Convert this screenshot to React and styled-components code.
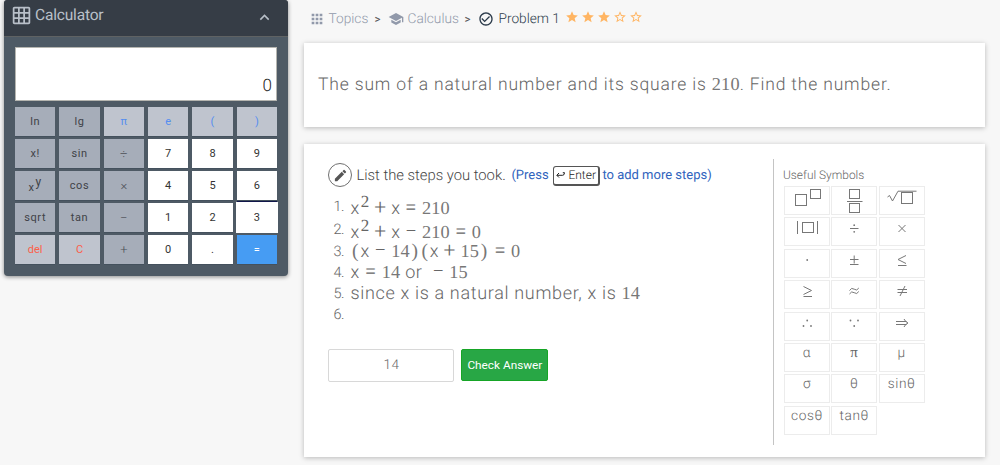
import React from 'react';
import styled, { createGlobalStyle } from 'styled-components';
import {
  MdApps, MdSchool, MdCheckCircleOutline, MdStar, MdStarBorder,
  MdEdit, MdGridOn, MdExpandLess,
} from 'react-icons/md';

const Global = createGlobalStyle`
  * { box-sizing: border-box; }
  html, body { margin: 0; height: 465px; overflow: hidden; background: #f7f7f7; }
  body {
    font-family: Roboto, "Liberation Sans", sans-serif;
    color: #666;
    text-rendering: geometricPrecision;
  }
  svg { display: block; flex: none; }
`;

const Page = styled.div`
  display: flex;
  align-items: flex-start;
  gap: 16px;
  height: 465px;
  padding-left: 4px;
  background: #f7f7f7;
`;

const Calculator = styled.aside`
  width: 284px;
  height: 276px;
  flex: none;
  background: #4e5a65;
  border-radius: 4px;
  box-shadow: 0 1px 4px rgba(0, 0, 0, 0.45);
`;

const CalcHeader = styled.header`
  display: flex;
  align-items: center;
  height: 37px;
  padding: 0 14px 6px 7px;
  background: #363d46;
  border-bottom: 1px solid #5f6263;
  border-radius: 3px 3px 0 0;
  color: #b9c0c9;
`;

const CalcTitle = styled.h1`
  flex: 1;
  margin: 0 0 0 3px;
  font-size: 15.5px;
  font-weight: 400;
  line-height: 31px;
  letter-spacing: -0.18px;
`;

const Chevron = styled(MdExpandLess)`
  position: relative;
  top: 2px;
`;

const Display = styled.div`
  display: flex;
  justify-content: flex-end;
  align-items: flex-end;
  height: 54px;
  margin: 10px 11px 6px;
  padding: 0 4px 3px;
  background: #fff;
  border: 1px solid #b5b5b0;
  color: #222;
  font-size: 17px;
  font-weight: 300;
  line-height: 22px;
`;

const Keys = styled.div`
  display: grid;
  grid-template-columns: repeat(6, 1fr);
  grid-auto-rows: 29px;
  gap: 3.1px 4px;
  margin: 0 11px;
`;

const tones = {
  fn: ['#a6adb9', '#3f4247'],
  op: ['#a6adb9', '#4d5158'],
  sym: ['#bfc4ce', '#558ef0'],
  num: ['#ffffff', '#333333'],
  del: ['#bfc4ce', '#fb604a'],
  eq: ['#469cf3', '#ffffff'],
};

const Key = styled.button`
  display: flex;
  align-items: center;
  justify-content: center;
  padding: 0;
  border: 0;
  background: ${(p) => tones[p.$tone][0]};
  color: ${(p) => tones[p.$tone][1]};
  box-shadow: ${(p) => (p.$active ? '0 0 0 1px #fff, 0 -2px 0 #10164a' : '0 1px 0 rgba(40,55,70,.25)')};
  font: 400 ${(p) => (p.$tone === 'op' ? 13 : 11)}px/28px Roboto, sans-serif;
  font-weight: ${(p) => (p.$tone === 'op' ? 300 : 400)};
  letter-spacing: ${(p) => (p.$tone === 'fn' ? '0.6px' : '0')};
`;

const PowerLabel = styled.span`
  position: relative;
  top: 2px;
`;

const Power = styled.sup`
  font-size: 12px;
  line-height: 1;
  position: relative;
  top: -5px;
  margin-left: 1px;
  vertical-align: baseline;
`;

const Main = styled.main`
  width: 682px;
  flex: none;
`;

const Crumbs = styled.nav`
  display: flex;
  align-items: center;
  height: 43px;
  padding: 0 0 5px 4.5px;
  font-size: 13.7px;
  font-weight: 300;
`;

const Crumb = styled.span`
  display: flex;
  align-items: center;
  gap: ${(p) => p.$gap || 4}px;
  width: ${(p) => p.$w}px;
  white-space: nowrap;
  color: ${(p) => (p.$current ? '#2b3a4a' : '#9199aa')};
`;

const Sep = styled.span`
  width: ${(p) => p.$w}px;
  color: #555;
  font-size: 11.5px;
  font-weight: 400;
`;

const Stars = styled.div`
  display: flex;
  gap: 2.1px;
  padding-bottom: 4px;
  color: #ffb563;
`;

const Card = styled.section`
  width: 681px;
  background: #fff;
  box-shadow: 0 1px 5px rgba(0, 0, 0, 0.25);
`;

const Question = styled(Card)`
  display: flex;
  align-items: center;
  height: 84px;
  padding: 0 14px 1px;
  margin-bottom: 17px;
  font-size: 17.5px;
  font-weight: 300;
  letter-spacing: 0.83px;
  white-space: pre;
`;

const Num = styled.span`
  font-family: "Liberation Serif", serif;
  font-weight: 400;
  font-size: 18.3px;
  letter-spacing: 0.15px;
  color: #777;
`;

const Op = styled.span`
  display: inline-block;
  width: 22px;
  text-align: center;
  font-size: 21px;
  line-height: 18px;
  letter-spacing: 0;
`;

const Paren = styled(Num)`
  display: inline-block;
  width: 10px;
  text-align: center;
  font-size: 19.5px;
  line-height: 18px;
`;

const Work = styled(Card)`
  display: flex;
  height: 313px;
`;

const Left = styled.div`
  width: 469px;
  padding: 18px 0 0 24.4px;
`;

const Prompt = styled.div`
  display: flex;
  align-items: center;
  height: 26px;
  font-size: 14px;
  font-weight: 400;
  white-space: pre;
`;

const Pencil = styled.span`
  display: flex;
  align-items: center;
  justify-content: center;
  width: 24px;
  height: 24px;
  margin-right: 4px;
  border: 1px solid #707070;
  border-radius: 50%;
  color: #555;
`;

const PromptText = styled.span`
  width: ${(p) => p.$w}px;
  font-weight: ${(p) => (p.$blue ? 400 : 300)};
  font-size: ${(p) => (p.$blue ? 13 : 14.8)}px;
  color: ${(p) => (p.$blue ? '#2f63bd' : '#444')};
`;

const EnterKey = styled.kbd`
  display: flex;
  align-items: center;
  gap: 3px;
  width: 47px;
  height: 20px;
  margin: 1px 2px 0 0;
  padding-left: 2px;
  border: 1px solid #555;
  border-width: 1px 2px 2px 1px;
  border-radius: 3px;
  color: #222;
  font: 300 12px Roboto, sans-serif;
`;

const Steps = styled.ol`
  list-style: none;
  margin: 8px 0 24px;
  padding: 0 0 0 5px;
`;

const Step = styled.li`
  display: flex;
  height: ${(p) => p.$h || 21}px;
  white-space: pre;
`;

const Index = styled.span`
  width: 17px;
  font-size: 14.5px;
  font-weight: 300;
  line-height: 22px;
  letter-spacing: -0.5px;
`;

const Formula = styled.span`
  padding-top: ${(p) => p.$top || 0}px;
  font-size: 18px;
  font-weight: 300;
  line-height: 21px;
  letter-spacing: ${(p) => p.$ls || 0}px;
`;

const Sup = styled.span`
  position: relative;
  top: -7px;
  margin-left: 1.5px;
  font-family: "Liberation Serif", serif;
  font-weight: 400;
  font-size: 17px;
  line-height: 1;
`;

const AnswerRow = styled.div`
  display: flex;
  gap: 7px;
`;

const Answer = styled.div`
  width: 126px;
  height: 33px;
  border: 1px solid #d8d8d8;
  border-radius: 2px;
  font-size: 13.5px;
  font-weight: 300;
  line-height: 31px;
  letter-spacing: 0.3px;
  text-align: center;
  color: #666;
`;

const Check = styled.button`
  width: 87px;
  height: 32px;
  padding: 0;
  border: 1px solid #16a526;
  border-radius: 2px;
  background: #28a745;
  color: #fff;
  font: 400 11.8px Roboto, sans-serif;
  white-space: nowrap;
`;

const Right = styled.div`
  height: 286px;
  margin-top: 15px;
  padding: 6px 0 0 9px;
  border-left: 1px solid #c4c4c4;
`;

const SymbolTitle = styled.h2`
  height: 20px;
  margin: 0;
  font-size: 11.9px;
  font-weight: 300;
  line-height: 20px;
`;

const SymbolGrid = styled.div`
  display: grid;
  grid-template-columns: repeat(3, 46px);
  grid-auto-rows: 29px;
  gap: 2.4px 1.3px;
  padding: 1px 0 0 1px;
`;

const SymbolKey = styled.div`
  display: flex;
  justify-content: center;
  height: 29px;
  border: 1px solid #ececec;
  font-size: 13.7px;
  font-weight: 300;
  line-height: 19px;
  letter-spacing: 0.6px;
`;

const PiGlyph = styled.span`
  font-family: "Liberation Serif", serif;
  font-size: 15px;
  font-weight: 400;
`;

const PowerBox = () => (
  <svg width="44" height="27" fill="none" stroke="#777">
    <rect x="10.5" y="7.5" width="11" height="11" />
    <rect x="25.5" y="2.5" width="10" height="9" />
  </svg>
);

const FractionBox = () => (
  <svg width="44" height="27" fill="none" stroke="#777">
    <rect x="17.5" y="2.5" width="10" height="9" />
    <path d="M15 14.5H30.5" />
    <rect x="17.5" y="16.5" width="10" height="9" />
  </svg>
);

const RootBox = () => (
  <svg width="44" height="27" fill="none" stroke="#777">
    <path d="M7.5 10l2-1.5 3 5.5L18 4.2h18.5" />
    <rect x="21.5" y="5.5" width="11" height="11" />
  </svg>
);

const AbsBox = () => (
  <svg width="44" height="27" fill="none" stroke="#777">
    <path d="M12.5 3v13M32.5 3v13" />
    <rect x="17.5" y="4.5" width="11" height="10" />
  </svg>
);

const ReturnArrow = () => (
  <svg width="9" height="8" viewBox="0 0 9 8" fill="none" stroke="#222">
    <path d="M3 2L.8 4.3 3 6.5M1 4.3h5.5q2 0 2-2.6H6.8" />
  </svg>
);

const glyph = (d) => () => (
  <svg width="44" height="27" fill="none" stroke="#777">
    <path d={d} />
  </svg>
);

const dots = (points) => () => (
  <svg width="44" height="27" fill="#777">
    {points.map(([x, y]) => <circle key={`${x}-${y}`} cx={x} cy={y} r="0.9" />)}
  </svg>
);

const Divide = () => (
  <svg width="44" height="27" fill="#777">
    <path d="M18 10h8.5v1H18z" />
    <circle cx="22.2" cy="7.2" r="0.9" />
    <circle cx="22.2" cy="13.8" r="0.9" />
  </svg>
);

const symbols = [
  PowerBox, FractionBox, RootBox,
  AbsBox, Divide, glyph('M18.5 7l7 7M25.5 7l-7 7'),
  dots([[22.2, 10]]), glyph('M18 9.5h8.5M22.2 5.5v8M18 14.5h8.5'), glyph('M26 5.5l-8 4 8 4M18 15.5h8.5'),
  glyph('M18.5 5.5l8 4-8 4M18.5 15.5h8.5'),
  glyph('M17.5 9.5q2-3.5 4.7-1.3t4.6-1.2M17.5 13q2-3.5 4.7-1.3t4.6-1.2'),
  glyph('M17.5 8.5h9.5M17.5 11.5h9.5M25 5l-5 10'),
  dots([[18.5, 13], [22.2, 7.5], [26, 13]]), dots([[18.5, 7.5], [22.2, 13], [26, 7.5]]),
  glyph('M16 8.5h10.5M16 11.5h10.5M24 6q1.5 3 4 4-2.5 1-4 4'),
];

const greek = ['α', 'π', 'μ', 'σ', 'θ', 'sinθ', 'cosθ', 'tanθ'];

const keyRows = [
  ['ln', 'fn'], ['lg', 'fn'], ['π', 'sym'], ['e', 'sym'], ['(', 'sym'], [')', 'sym'],
  ['x!', 'fn'], ['sin', 'fn'], ['÷', 'op'], ['7', 'num'], ['8', 'num'], ['9', 'num'],
  ['pow', 'fn'], ['cos', 'fn'], ['×', 'op'], ['4', 'num'], ['5', 'num'], ['6', 'num'],
  ['sqrt', 'fn'], ['tan', 'fn'], ['−', 'op'], ['1', 'num'], ['2', 'num'], ['3', 'num'],
  ['del', 'del'], ['C', 'del'], ['+', 'op'], ['0', 'num'], ['.', 'num'], ['=', 'eq'],
];

export default function App() {
  return (
    <>
      <Global />
      <Page>
        <Calculator>
          <CalcHeader>
            <MdGridOn size={21} />
            <CalcTitle>Calculator</CalcTitle>
            <Chevron size={19} />
          </CalcHeader>
          <Display>0</Display>
          <Keys>
            {keyRows.map(([label, tone]) => (
              <Key key={label} $tone={tone} $active={label === '3'}>
                {label === 'pow' ? <PowerLabel>x<Power>y</Power></PowerLabel> : label}
              </Key>
            ))}
          </Keys>
        </Calculator>

        <Main>
          <Crumbs>
            <Crumb $w={66}><MdApps size={16} />Topics</Crumb>
            <Sep $w={13}>&gt;</Sep>
            <Crumb $w={77}><MdSchool size={16} />Calculus</Crumb>
            <Sep $w={13}>&gt;</Sep>
            <Crumb $w={87.5} $gap={5} $current><MdCheckCircleOutline size={16} />Problem 1</Crumb>
            <Stars>
              <MdStar size={14} /><MdStar size={14} /><MdStar size={14} />
              <MdStarBorder size={14} /><MdStarBorder size={14} />
            </Stars>
          </Crumbs>

          <Question>
            <span>The sum of a natural number and its square is <Num>210</Num>. Find the number.</span>
          </Question>

          <Work>
            <Left>
              <Prompt>
                <Pencil><MdEdit size={15} /></Pencil>
                <PromptText $w={155}>List the steps you took.</PromptText>
                <PromptText $blue $w={42}>(Press</PromptText>
                <EnterKey><ReturnArrow />Enter</EnterKey>
                <PromptText $blue>to add more steps)</PromptText>
              </Prompt>
              <Steps>
                <Step $h={23}>
                  <Index>1.</Index>
                  <Formula $top={2}>x<Sup>2</Sup><Op>+</Op>x<Op>=</Op><Num>210</Num></Formula>
                </Step>
                <Step $h={22}>
                  <Index>2.</Index>
                  <Formula $top={2.5}>x<Sup>2</Sup><Op>+</Op>x<Op>−</Op><Num>210</Num><Op>=</Op><Num>0</Num></Formula>
                </Step>
                <Step>
                  <Index>3.</Index>
                  <Formula>
                    <Paren>(</Paren>x<Op>−</Op><Num>14</Num><Paren>)</Paren>
                    <Paren>(</Paren>x<Op>+</Op><Num>15</Num><Paren>)</Paren>
                    <Op>=</Op><Num>0</Num>
                  </Formula>
                </Step>
                <Step>
                  <Index>4.</Index>
                  <Formula $ls={0.5}>x<Op>=</Op><Num>14</Num> or <Op>−</Op><Num>15</Num></Formula>
                </Step>
                <Step>
                  <Index>5.</Index>
                  <Formula $ls={0.67}>since x is a natural number, x is <Num>14</Num></Formula>
                </Step>
                <Step><Index>6.</Index></Step>
              </Steps>
              <AnswerRow>
                <Answer>14</Answer>
                <Check>Check Answer</Check>
              </AnswerRow>
            </Left>
            <Right>
              <SymbolTitle>Useful Symbols</SymbolTitle>
              <SymbolGrid>
                {symbols.map((Drawing, i) => <SymbolKey key={i}><Drawing /></SymbolKey>)}
                {greek.map((name) => (
                  <SymbolKey key={name}>{name === 'π' ? <PiGlyph>π</PiGlyph> : name}</SymbolKey>
                ))}
              </SymbolGrid>
            </Right>
          </Work>
        </Main>
      </Page>
    </>
  );
}
